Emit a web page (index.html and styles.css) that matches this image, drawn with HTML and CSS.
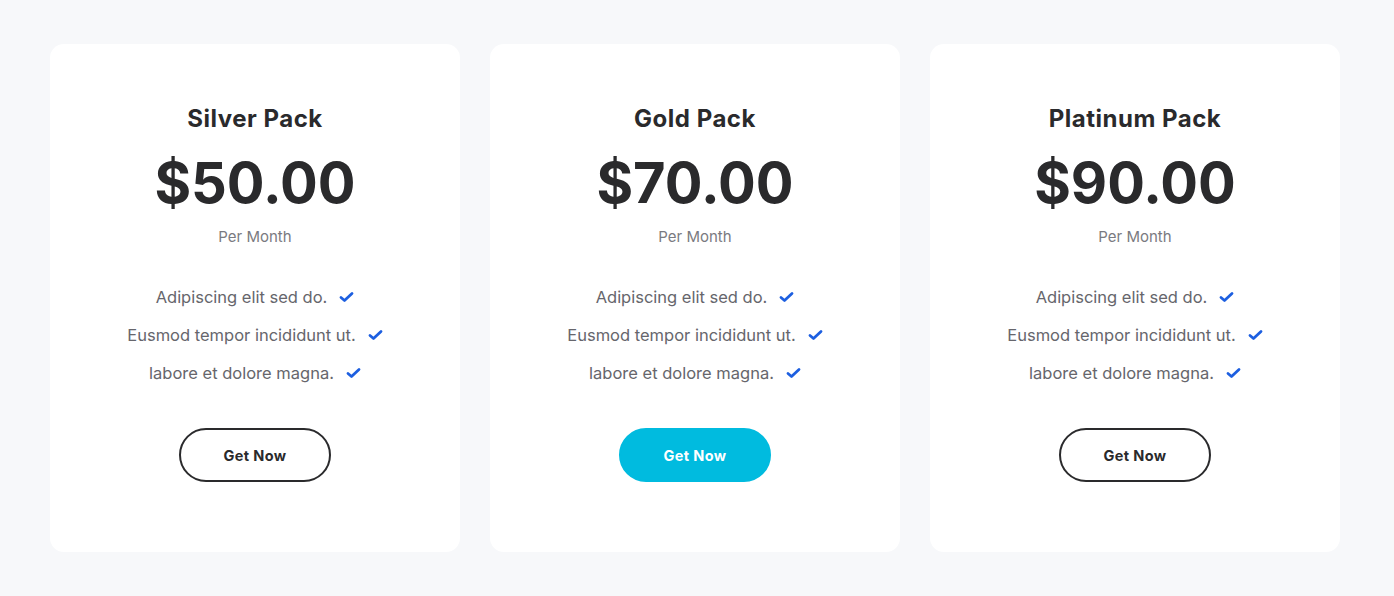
FILE: index.html
```html
<!DOCTYPE html>
<html lang="en">
<head>
<meta charset="utf-8">
<title>Pricing</title>
<link rel="stylesheet" href="styles.css">
</head>
<body>
<main class="pricing">
  <section class="card">
    <h2 class="title">Silver Pack</h2>
    <div class="price">$50.00</div>
    <div class="period">Per Month</div>
    <ul class="features">
      <li>Adipiscing elit sed do.<svg class="check" viewBox="0 0 15 12"><path d="M2 6.5 L5.5 9.5 L13 2.5" /></svg></li>
      <li>Eusmod tempor incididunt ut.<svg class="check" viewBox="0 0 15 12"><path d="M2 6.5 L5.5 9.5 L13 2.5" /></svg></li>
      <li>labore et dolore magna.<svg class="check" viewBox="0 0 15 12"><path d="M2 6.5 L5.5 9.5 L13 2.5" /></svg></li>
    </ul>
    <a class="btn" href="#">Get Now</a>
  </section>
  <section class="card">
    <h2 class="title">Gold Pack</h2>
    <div class="price">$70.00</div>
    <div class="period">Per Month</div>
    <ul class="features">
      <li>Adipiscing elit sed do.<svg class="check" viewBox="0 0 15 12"><path d="M2 6.5 L5.5 9.5 L13 2.5" /></svg></li>
      <li>Eusmod tempor incididunt ut.<svg class="check" viewBox="0 0 15 12"><path d="M2 6.5 L5.5 9.5 L13 2.5" /></svg></li>
      <li>labore et dolore magna.<svg class="check" viewBox="0 0 15 12"><path d="M2 6.5 L5.5 9.5 L13 2.5" /></svg></li>
    </ul>
    <a class="btn btn-primary" href="#">Get Now</a>
  </section>
  <section class="card">
    <h2 class="title">Platinum Pack</h2>
    <div class="price">$90.00</div>
    <div class="period">Per Month</div>
    <ul class="features">
      <li>Adipiscing elit sed do.<svg class="check" viewBox="0 0 15 12"><path d="M2 6.5 L5.5 9.5 L13 2.5" /></svg></li>
      <li>Eusmod tempor incididunt ut.<svg class="check" viewBox="0 0 15 12"><path d="M2 6.5 L5.5 9.5 L13 2.5" /></svg></li>
      <li>labore et dolore magna.<svg class="check" viewBox="0 0 15 12"><path d="M2 6.5 L5.5 9.5 L13 2.5" /></svg></li>
    </ul>
    <a class="btn" href="#">Get Now</a>
  </section>
</main>
</body>
</html>
```

FILE: styles.css
```css
* { box-sizing: border-box; }
html, body { margin: 0; padding: 0; }
body {
  background: #f7f8fa;
  font-family: "Inter", "DejaVu Sans", sans-serif;
  color: #2a2a2c;
}
.pricing {
  display: flex;
  gap: 30px;
  padding: 44px 50px 0;
}
.card {
  width: 410px;
  height: 508px;
  background: #ffffff;
  border-radius: 14px;
  display: flex;
  flex-direction: column;
  align-items: center;
  padding-top: 60px;
}
.title {
  margin: 0;
  font-size: 24px;
  line-height: 30px;
  font-weight: 700;
  color: #2a2a2c;
  letter-spacing: 0.5px;
}
.price {
  margin-top: 17px;
  font-size: 56px;
  line-height: 64px;
  font-weight: 700;
  color: #2a2a2c;
}
.period {
  margin-top: 12px;
  font-size: 15px;
  line-height: 20px;
  color: #7a7a80;
}
.features {
  list-style: none;
  margin: 38px 0 0;
  padding: 0;
  display: flex;
  flex-direction: column;
  align-items: center;
  gap: 14px;
}
.features li {
  display: flex;
  align-items: center;
  font-size: 16.5px;
  line-height: 24px;
  color: #66666c;
}
.check {
  width: 15px;
  height: 12px;
  margin-left: 12px;
  fill: none;
  stroke: #1d5fe0;
  stroke-width: 2.8;
  stroke-linecap: round;
  stroke-linejoin: round;
}
.btn {
  margin-top: 43px;
  width: 152px;
  height: 54px;
  border: 2px solid #2a2a2c;
  border-radius: 27px;
  display: flex;
  align-items: center;
  justify-content: center;
  font-size: 14.5px;
  font-weight: 700;
  letter-spacing: 0.4px;
  color: #2a2a2c;
  text-decoration: none;
}
.btn-primary {
  background: #00bbdf;
  border-color: #00bbdf;
  color: #ffffff;
}
```
